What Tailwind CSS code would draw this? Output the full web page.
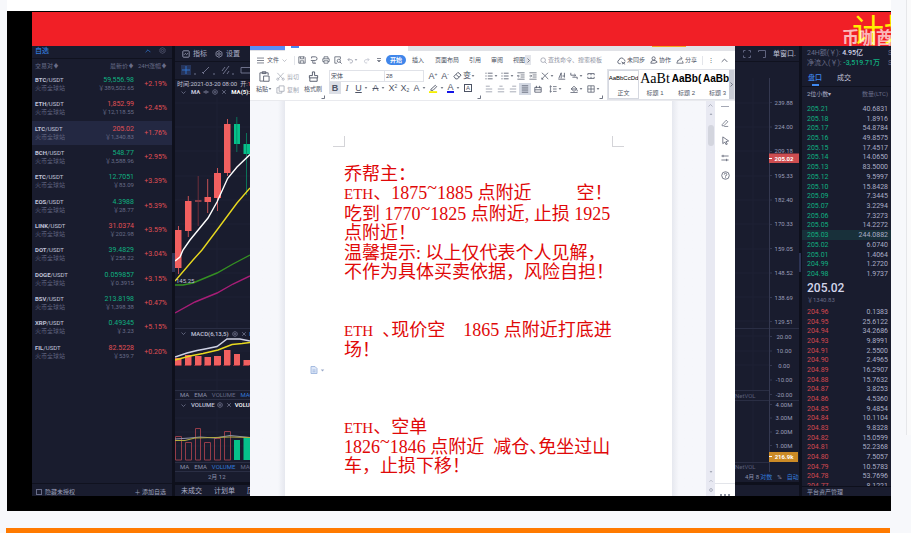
<!DOCTYPE html>
<html lang="zh-CN">
<head>
<meta charset="utf-8">
<title>行情与策略</title>
<script src="https://cdn.jsdelivr.net/npm/@tailwindcss/browser@4"></script>
</head>
<body class="h-screen overflow-hidden bg-[#f7f8fb] flex flex-col font-[Roboto,'Noto_Sans_CJK_SC',sans-serif] text-[7px] leading-[8px]">
<svg class="hidden">
  <defs>
    <symbol id="gear" viewBox="0 0 10 10"><path d="M5 .8 8.7 2.9V7.1L5 9.2 1.3 7.1V2.9Z" fill="none" stroke="currentColor" stroke-width=".9"/><circle cx="5" cy="5" r="1.6" fill="none" stroke="currentColor" stroke-width=".9"/></symbol>
    <symbol id="eye" viewBox="0 0 10 10"><path d="M.8 5Q5 .5 9.2 5 5 9.5.8 5Z" fill="none" stroke="currentColor" stroke-width=".9"/><circle cx="5" cy="5" r="1.3" fill="currentColor"/></symbol>
    <symbol id="x" viewBox="0 0 10 10"><path d="M2 2 8 8M8 2 2 8" stroke="currentColor"/></symbol>
    <symbol id="down" viewBox="0 0 10 10"><path d="M1 3 5 7 9 3" fill="none" stroke="currentColor" stroke-width="1.2"/></symbol>
    <symbol id="up" viewBox="0 0 10 10"><path d="M1 7 5 3 9 7" fill="none" stroke="currentColor" stroke-width="1.2"/></symbol>
    <symbol id="right" viewBox="0 0 10 10"><path d="M3 1 7 5 3 9" fill="none" stroke="currentColor" stroke-width="1.4"/></symbol>
    <symbol id="chart" viewBox="0 0 10 10"><rect x="1" y="1" width="8" height="8" rx="1" fill="none" stroke="currentColor"/><path d="M2.5 6 4.2 4.3 5.8 5.7 7.5 4" fill="none" stroke="currentColor" stroke-width=".9"/></symbol>
    <symbol id="caret" viewBox="0 0 4 4"><path d="M.6 1.2H3.4L2 2.8Z" fill="currentColor"/></symbol>
    <symbol id="save" viewBox="0 0 10 10"><path d="M1 1H8L9 2V9H1ZM3 1V3.5H7V1M2.8 9V6H7.2V9" fill="none" stroke="currentColor" stroke-width=".9"/></symbol>
    <symbol id="export" viewBox="0 0 10 10"><path d="M2 3V1H6.5A2.2 2.2 0 0 1 6.5 5.6H3.5V9H6M1 5.6H3.5M5.5 7.5 7 9 5.5 10" fill="none" stroke="currentColor"/></symbol>
    <symbol id="print" viewBox="0 0 10 10"><path d="M2.5 3.5V1H7.5V3.5M2.5 7H1V3.5H9V7H7.5M2.5 6H7.5V9H2.5Z" fill="none" stroke="currentColor" stroke-width=".9"/></symbol>
    <symbol id="preview" viewBox="0 0 10 10"><path d="M4 9H1V1H8V4" fill="none" stroke="currentColor" stroke-width=".9"/><circle cx="6" cy="6" r="2" fill="none" stroke="currentColor" stroke-width=".9"/><path d="M7.5 7.5 9.5 9.5" stroke="currentColor"/></symbol>
    <symbol id="undo" viewBox="0 0 10 10"><path d="M3.5 1.5 1.3 3.8 3.5 6M1.3 3.8H6A2.4 2.4 0 0 1 6 8.5H4" fill="none" stroke="currentColor"/></symbol>
    <symbol id="redo" viewBox="0 0 10 10"><path d="M6.5 1.5 8.7 3.8 6.5 6M8.7 3.8H4A2.4 2.4 0 0 0 4 8.5H6" fill="none" stroke="currentColor"/></symbol>
    <symbol id="search" viewBox="0 0 10 10"><circle cx="4.5" cy="4.5" r="3.3" fill="none" stroke="currentColor"/><path d="M7 7 9.5 9.5" stroke="currentColor"/></symbol>
    <symbol id="cloud" viewBox="0 0 10 10"><path d="M4 8.5H2.5A2 2 0 0 1 2.3 4.6 2.8 2.8 0 0 1 7.7 4 2.2 2.2 0 0 1 9 6M5 6.5 9 9.2M9 6.8 5.5 9" fill="none" stroke="currentColor" stroke-width=".9"/></symbol>
    <symbol id="person" viewBox="0 0 10 10"><circle cx="4.5" cy="3" r="2" fill="none" stroke="currentColor"/><path d="M1 9Q1 5.5 4.5 5.5 8 5.5 9 7.5L6 9Z" fill="none" stroke="currentColor"/></symbol>
    <symbol id="share" viewBox="0 0 10 10"><path d="M2.5 5 1 9H9L8 6M3 6.5Q3.5 3 7 3M5.5 1 7.8 3 5.5 5" fill="none" stroke="currentColor" stroke-width=".9"/></symbol>
    <symbol id="paste" viewBox="0 0 12 12"><path d="M5 11H1V2H10V4.5M3.5 2V.8H7.5V2.8H3.5ZM5 5.5H11V11.2H5Z" fill="none" stroke="currentColor" stroke-width=".9"/></symbol>
    <symbol id="cut" viewBox="0 0 10 10"><path d="M1.5 1 7.5 7.5M8.5 1 2.5 7.5" stroke="currentColor" stroke-width=".8"/><circle cx="2" cy="8" r="1.2" fill="none" stroke="currentColor" stroke-width=".8"/><circle cx="8" cy="8" r="1.2" fill="none" stroke="currentColor" stroke-width=".8"/></symbol>
    <symbol id="copy" viewBox="0 0 10 10"><path d="M3.5 1H9V7H3.5ZM3.5 3H1V9H6.5V7" fill="none" stroke="currentColor" stroke-width=".9"/></symbol>
    <symbol id="brush" viewBox="0 0 12 12"><path d="M4.8 5V1H7.2V5H10.5V7.5H1.5V5ZM2 7.5V11.2H10V7.5" fill="none" stroke="currentColor"/></symbol>
    <symbol id="eraser" viewBox="0 0 10 10"><path d="M1 6 5.5 1.5 9 4.5 5 8.8H3ZM3.5 4 6.8 7" fill="none" stroke="currentColor"/></symbol>
    <symbol id="bullets" viewBox="0 0 10 10"><path d="M3.5 1.5H9.5M3.5 5H9.5M3.5 8.5H9.5M.5 1.5H2M.5 5H2M.5 8.5H2" stroke="currentColor"/></symbol>
    <symbol id="outdent" viewBox="0 0 10 10"><path d="M.5 1H9.5M4.5 3.7H9.5M4.5 6.3H9.5M.5 9H9.5M3.3 5H.7M2 3.6.6 5 2 6.4" fill="none" stroke="currentColor" stroke-width=".9"/></symbol>
    <symbol id="indent" viewBox="0 0 10 10"><path d="M.5 1H9.5M4.5 3.7H9.5M4.5 6.3H9.5M.5 9H9.5M.6 5H3.2M2 3.6 3.4 5 2 6.4" fill="none" stroke="currentColor" stroke-width=".9"/></symbol>
    <symbol id="cross" viewBox="0 0 10 10"><path d="M1 9 5 4.5 9 9M1 1 5 4.5 9 1M3 9H1V7" fill="none" stroke="currentColor" stroke-width=".9"/></symbol>
    <symbol id="sort" viewBox="0 0 10 10"><path d="M1 8 4 1V8M.5 9H9M8 1V7M5.5 5H8" fill="none" stroke="currentColor"/></symbol>
    <symbol id="tabs" viewBox="0 0 10 10"><path d="M1 1V4H7M5.5 2.5 7 4 5.5 5.5M9 9V6.5H3" fill="none" stroke="currentColor"/></symbol>
    <symbol id="grid4" viewBox="0 0 10 10"><path d="M1 2H9M1 2V4M5 2V4M9 2V4M1 8H9M1 6V8M5 6V8M9 6V8" stroke="currentColor"/></symbol>
    <symbol id="al" viewBox="0 0 10 10"><path d="M1 1.5H6M1 5H9M1 8.5H9" stroke="currentColor"/></symbol>
    <symbol id="ac" viewBox="0 0 10 10"><path d="M3 1.5H7M1 5H9M1 8.5H9" stroke="currentColor"/></symbol>
    <symbol id="ar" viewBox="0 0 10 10"><path d="M4 1.5H9M1 5H9M1 8.5H9" stroke="currentColor"/></symbol>
    <symbol id="aj" viewBox="0 0 10 10"><path d="M1 1H9M1 3.7H9M1 6.3H9M1 9H9" stroke="currentColor"/></symbol>
    <symbol id="ad" viewBox="0 0 10 10"><path d="M1 3V9H9V3M1 6H9M3 1V4M7 1V4M1 3H9" fill="none" stroke="currentColor"/></symbol>
    <symbol id="ls" viewBox="0 0 10 10"><path d="M2 1V9M.7 2.3 2 1 3.3 2.3M.7 7.7 2 9 3.3 7.7M5 2H9.5M5 5H9.5M5 8H9.5" fill="none" stroke="currentColor" stroke-width=".9"/></symbol>
    <symbol id="fill" viewBox="0 0 10 10"><path d="M1.5 5 5 1.5 8.5 5 5 8ZM1.5 5H8.5M9 6V8M.5 9.5H9.5" fill="none" stroke="currentColor"/></symbol>
    <symbol id="border" viewBox="0 0 10 10"><path d="M1 1H9V9H1ZM5 1V9M1 5H9" fill="none" stroke="currentColor" stroke-width=".9"/></symbol>
    <symbol id="launch" viewBox="0 0 4 4"><path d="M3.5.5V3.5H.5" fill="none" stroke="currentColor" stroke-width=".8"/></symbol>
    <symbol id="pen" viewBox="0 0 10 10"><path d="M1.5 7 6.5 1.5 8.5 3.5 3.5 8.5H1.5ZM4 9.3H9" fill="none" stroke="currentColor" stroke-width=".9"/></symbol>
    <symbol id="cursor" viewBox="0 0 10 10"><path d="M2 1 8.5 5.5 5.5 6.2 7 9 5.5 9.5 4.3 6.8 2 8.5Z" fill="none" stroke="currentColor" stroke-width=".9"/></symbol>
    <symbol id="sliders" viewBox="0 0 10 10"><path d="M.5 2.5H9.5M.5 7.5H9.5M2.5 1V4M7 6V9" stroke="currentColor"/></symbol>
    <symbol id="help" viewBox="0 0 10 10"><circle cx="5" cy="5" r="4.2" fill="none" stroke="currentColor" stroke-width=".9"/><path d="M3.6 4A1.4 1.4 0 1 1 5 5.3V6.2M5 7V8" fill="none" stroke="currentColor" stroke-width=".9"/></symbol>
  </defs>
</svg>

<div class="flex flex-1 min-h-0">
  <div class="ml-[7px] flex-1 min-w-0 flex flex-col">
    <div class="h-[11px] shrink-0 bg-white"></div>
    <main class="flex-1 min-h-0 bg-black pt-px pl-[25px] pb-[15px] flex flex-col">
      <header class="relative h-[34px] shrink-0 bg-[#f11f26] overflow-hidden">
        <h1 class="absolute -right-[25px] top-[3px] text-[32px] leading-[32px] text-[#fff000] whitespace-nowrap">计划</h1>
        <p class="absolute -right-[2px] top-[17px] text-[17px] leading-[18px] font-bold text-white/70 whitespace-nowrap">币咖酋</p>
      </header>

      <div class="flex-1 min-h-0 flex bg-[#0e101c] text-[#8c90ab]">

        <!-- Watchlist -->
        <section class="w-[140px] shrink-0 bg-[#191c2e] flex flex-col">
          <div class="h-[13px] px-[3px] pb-[3px] flex items-center justify-between border-b border-[#10121f]">
            <h2 class="font-medium text-[#3279d8]">自选</h2>
            <span class="flex gap-2 items-center pr-[3px]">
              <svg class="size-[6px] text-[#3279d8]"><use href="#up"/></svg>
              <svg class="size-[7px] text-[#5f637e]"><use href="#gear"/></svg>
            </span>
          </div>
          <table class="w-full">
            <thead><tr class="h-[13px] text-[6px] text-[#686c88]">
              <th class="w-[52px] pl-[3px] text-left font-normal">交易对♦</th>
              <th class="text-right font-normal">最新价♦</th>
              <th class="w-[38px] pr-[5px] text-right font-normal whitespace-nowrap">24H涨幅♦</th>
            </tr></thead>
          </table>
          <table class="w-full h-[292px]"><tbody id="watch"></tbody></table>
          <div class="mt-auto h-[13px] px-[4px] pt-[3px] flex items-center justify-between border-t border-[#10121f] text-[#9da1bb]">
            <label class="flex items-center gap-[3px] text-[6px]"><input type="checkbox" class="appearance-none size-[6px] border border-[#686c88]">隐藏未授权</label>
            <button class="pr-[2px] text-[6px]">＋ 添加自选</button>
          </div>
        </section>

        <div class="w-[3px] shrink-0 pt-[207px]"><div class="h-[19px] w-[3px] bg-[#2c3354]"></div></div>

        <!-- Chart, left part -->
        <section class="w-[75px] shrink-0 overflow-hidden whitespace-nowrap flex flex-col bg-[#191c2e] text-[6px]">
          <div class="h-[16px] pl-[7px] flex items-center gap-[8px] text-[7px] text-[#a9adc6] border-b border-[#10121f]">
            <button class="flex items-center gap-[3px]"><svg class="size-[8px]"><use href="#chart"/></svg>指标</button>
            <button class="flex items-center gap-[3px]"><svg class="size-[8px]"><use href="#gear"/></svg>设置</button>
          </div>
          <svg class="h-[17px] w-[75px] shrink-0" viewBox="0 0 75 17" fill="none" stroke="#777b95" stroke-width=".9">
            <rect x="6" y="3" width="10" height="10" fill="#26345a" stroke="none"/>
            <path d="M11 4V12M7 8H15" stroke="#3279d8"/>
            <path d="M28 11 34 5M27 10 29 12M47 9 50 5M48 12 54 4M52 12 54 9M66 5.500H76V11H66Z"/>
            <path d="M19 12H21M38 12H40M57 12H59"/>
          </svg>
          <p class="h-[8px] pl-[2px] border-t border-[#10121f] text-[#c0c3d8] leading-[7px]">时间:2021-03-20 08:00 &nbsp;开:<span class="text-[#e0555a]">197</span></p>
          <div class="h-[10px] pl-[6px] flex items-center">
            <svg class="size-[5px] mr-[5px] shrink-0"><use href="#down"/></svg><b class="w-[13px] font-bold text-[#c0c3d8]">MA</b>
            <span class="flex gap-[3px] mr-[4px] shrink-0"><svg class="size-[6px]"><use href="#eye"/></svg><svg class="size-[6px]"><use href="#gear"/></svg><svg class="size-[6px]"><use href="#x"/></svg></span>
            <b class="text-white">MA(5):</b>
          </div>
          <svg class="h-[231px] w-[75px] shrink-0" viewBox="175 97 75 231">
            <path d="M175 103H250M175 127H250M175 151H250M175 176H250M175 200H250M175 224H250M175 249H250M175 273H250M175 297H250M175 321H250M217 97V328" stroke="#202438" stroke-width=".7"/>
            <path d="M175 230h6.500v38h-6.500ZM185 201h6.500v30h-6.500ZM195 200.500h6.500v1h-6.500ZM204.500 197h6.500v5h-6.500ZM214 173h7v25h-7ZM224 124h6.500v49h-6.500Z" fill="#f16060"/>
            <path d="M178.500 226V274M188.300 196V237M207.700 179V213M217.500 168V211M227.500 119V176" stroke="#f16060" stroke-width=".8"/>
            <path d="M198.200 176V226" stroke="#84343f" stroke-width=".8"/>
            <path d="M234 124h6v20h-6ZM243.500 144H250v10h-6.500Z" fill="#06c18a"/>
            <path d="M236.800 117V152M246.500 133V195" stroke="#078964" stroke-width=".8"/>
            <g fill="none" stroke-width="1.400">
              <path d="M175 261 180 257 183 250 190 240 208 218 217 202 227.700 178.300 237 167 250 154.500" stroke="#fff"/>
              <path d="M175 281 193 260 202 250 217 230 237 203 250 188" stroke="#e8d91f"/>
              <path d="M175 285H183L193 283 205 278 217 273 233 264 250 255" stroke="#349022"/>
              <path d="M175 313 195 302 217 293 233 284 250 276" stroke="#a81d77"/>
            </g>
            <text x="176" y="283" font-size="6" fill="#c0c3d8">145.25</text>
          </svg>
          <div class="h-[10px] pl-[6px] flex items-center border-t border-[#2a2e44]">
            <svg class="size-[5px] mr-[5px] shrink-0"><use href="#down"/></svg><b class="mr-[3px] font-medium text-[#c0c3d8]">MACD(6,13,5)</b>
            <svg class="size-[6px] mr-[3px] shrink-0"><use href="#gear"/></svg><svg class="size-[6px] mr-[3px] shrink-0"><use href="#x"/></svg><b class="font-medium text-white">DIF</b>
          </div>
          <svg class="h-[52px] w-[75px] shrink-0" viewBox="175 338 75 52">
            <path d="M175 351H250M175 380H250M217 338V390" stroke="#202438" stroke-width=".7"/>
            <path d="M175 358h6.500v7h-6.500ZM185 355h6.500v10h-6.500ZM195 356h6.500v9h-6.500ZM204.500 357h6.500v8h-6.500ZM214 356h7v9h-7ZM224 350h6.500v15h-6.500ZM234 354h6v11h-6ZM243.500 360H250v5h-6.500Z" fill="#f16060"/>
            <path d="M175 365.500H250" stroke="#9a3540" stroke-dasharray="6.500 3.200"/>
            <path d="M175 357 187 353 197 350.500 205 349 217 346.500 227 339H240L250 341" fill="none" stroke="#cfd2e4" stroke-width="1.400"/>
            <path d="M175 360 190 356 203 353.500 218 350 232 344.500 242 343.500 250 342.500" fill="none" stroke="#e8d91f" stroke-width="1.400"/>
          </svg>
          <div class="h-[10px] pl-[5px] flex items-center gap-[5px] border-y border-[#2a2e44]"><span>MA</span><span>EMA</span><span class="text-[#676b86]">VOLUME</span><span class="text-[#3279d8]">MACD</span></div>
          <div class="h-[10px] pl-[6px] flex items-center">
            <svg class="size-[5px] mr-[5px] shrink-0"><use href="#down"/></svg><b class="mr-[2px] font-medium text-[#c0c3d8]">VOLUME</b>
            <svg class="size-[6px] mr-[3px] shrink-0"><use href="#gear"/></svg><svg class="size-[6px] mr-[3px] shrink-0"><use href="#x"/></svg><b class="font-medium text-white">VOLUME</b>
          </div>
          <svg class="h-[52px] w-[75px] shrink-0" viewBox="175 410 75 52">
            <path d="M175 418H250M175 432H250M175 446H250M217 410V462" stroke="#202438" stroke-width=".7"/>
            <path d="M175.500 436.500h6V460h-6ZM185.500 442.500h6V460h-6ZM195.500 428.500h5V460h-5ZM204.500 442.500h6V460h-6ZM214.500 438.500h6V460h-6ZM224.500 431.500h6V460h-6Z" fill="none" stroke="#943c49"/>
            <path d="M234 440h6v20h-6ZM243.500 437H250v23h-6.500Z" fill="#06c18a"/>
            <path d="M175 439 190 438 200 437 215 438 230 435.500 250 437.500" fill="none" stroke="#8f92a8"/>
            <path d="M175 440.500H185L195 438 215 437.500 230 437 250 437.500" fill="none" stroke="#b3ab40"/>
          </svg>
          <div class="h-[10px] pl-[5px] flex items-center gap-[5px] border-y border-[#2a2e44]"><span>MA</span><span>EMA</span><span class="text-[#3279d8]">VOLUME</span><span class="text-[#676b86]">MACD</span></div>
          <p class="h-[10px] pl-[33px] leading-[10px]">2月 12</p>
          <div class="h-[3px] bg-[#0e101c]"></div>
          <nav class="mt-auto h-[10px] pl-[6px] flex items-center gap-[12px] text-[7px] text-[#a9adc6]"><a href="#">未成交</a><a href="#">计划单</a><a href="#">历史</a></nav>
        </section>

        <!-- Word processor -->
        <section class="flex-1 min-w-0 bg-white text-[#4d5364] flex flex-col overflow-hidden font-['Liberation_Sans','Noto_Sans_CJK_SC',sans-serif]">
          <div class="h-[5px] shrink-0 flex bg-[#e1e2e7]">
            <div class="w-[35px] h-[4px] bg-[#5b8cf5]"></div>
            <div class="w-[123px] bg-white pl-[6px]"><div class="w-[8px] h-[2px] bg-[#4a85f0]"></div></div>
            <div class="ml-auto mr-[49px] w-[34px] h-px bg-[#f5a623]"></div>
          </div>
          <nav class="h-[18px] shrink-0 pl-[7px] pr-[7px] flex items-center whitespace-nowrap text-[6px]">
            <button class="flex items-center gap-[3px] w-[37px]"><svg class="size-[7px]" viewBox="0 0 10 10"><path d="M0 1.500H10M0 5H10M0 8.500H10" stroke="currentColor"/></svg>文件<svg class="size-[5px] text-[#9a9eaa]"><use href="#down"/></svg></button>
            <span class="w-[2px] h-[9px] border-l border-[#e3e5ea]"></span>
            <button class="w-3" aria-label="保存"><svg class="mx-auto size-[8px]"><use href="#save"/></svg></button>
            <button class="w-3" aria-label="输出"><svg class="mx-auto size-[8px]"><use href="#export"/></svg></button>
            <button class="w-3" aria-label="打印"><svg class="mx-auto size-[8px]"><use href="#print"/></svg></button>
            <button class="w-3" aria-label="预览"><svg class="mx-auto size-[8px]"><use href="#preview"/></svg></button>
            <button class="w-4 flex items-center justify-center text-[#8f94a3]" aria-label="撤销"><svg class="size-[7px]"><use href="#undo"/></svg><svg class="size-[4px]"><use href="#caret"/></svg></button>
            <button class="w-3 text-[#b8bcc8]" aria-label="恢复"><svg class="mx-auto size-[7px]"><use href="#redo"/></svg></button>
            <button class="w-[14px]" aria-label="更多"><svg class="mx-auto size-[6px]" viewBox="0 0 6 6"><path d="M1 1.500H5M1.500 3.500H4.500L3 5Z" stroke="currentColor" stroke-width=".7" fill="none"/></svg></button>
            <button class="w-[20px] h-[10px] rounded-full bg-[#4086ea] text-white font-bold leading-[10px]">开始</button>
            <button class="ml-[6px]">插入</button>
            <button class="ml-[11px]">页面布局</button>
            <button class="ml-[10px]">引用</button>
            <button class="ml-[10px]">审阅</button>
            <button class="ml-[10px]">视图</button>
            <button class="w-[6px] h-[10px] bg-[#e3e5ea]" aria-label="更多选项卡"><svg class="mx-auto size-[5px]"><use href="#right"/></svg></button>
            <label class="ml-[9px] flex items-center gap-px text-[#8f94a3]"><svg class="size-[7px]"><use href="#search"/></svg><input class="w-[64px] placeholder:text-[#8f94a3]" placeholder="查找命令、搜索模板" aria-label="查找命令"></label>
            <span class="ml-auto flex items-center gap-[5px]">
              <button class="flex items-center gap-px"><svg class="size-[9px]"><use href="#cloud"/></svg>未同步</button>
              <button class="flex items-center gap-px"><svg class="size-[8px]"><use href="#person"/></svg>协作</button>
              <button class="flex items-center gap-px"><svg class="size-[8px]"><use href="#share"/></svg>分享</button>
              <span class="h-[9px] border-l border-[#e3e5ea]"></span>
              <button>⋮</button>
              <button class="pl-[2px]" aria-label="收起"><svg class="size-[7px]"><use href="#up"/></svg></button>
            </span>
          </nav>

          <div class="h-[32px] shrink-0 pl-[6px] flex whitespace-nowrap text-[6px] border-b border-[#e9eaee]">
            <button class="w-[20px] pt-[2px] flex flex-col items-start gap-[3px]"><svg class="ml-[3px] size-[11px]"><use href="#paste"/></svg><span class="flex items-center">粘贴<svg class="size-[4px]"><use href="#caret"/></svg></span></button>
            <div class="w-[27px] pt-[3px] flex flex-col gap-[4px] text-[#a4a8b4]">
              <button class="flex items-center gap-[2px]"><svg class="size-[9px]"><use href="#cut"/></svg>剪切</button>
              <button class="flex items-center gap-[2px]"><svg class="size-[9px]"><use href="#copy"/></svg>复制</button>
            </div>
            <button class="w-[20px] pt-[2px] flex flex-col items-center gap-[3px]"><svg class="size-[11px]"><use href="#brush"/></svg>格式刷</button>
            <svg class="mt-[26px] -ml-[2px] w-[4px] h-[4px]"><use href="#launch"/></svg>

            <div class="ml-[4px] w-[148px] flex flex-col">
              <div class="h-[13px] flex items-center text-[9px]">
                <select class="appearance-none w-[56px] h-[12px] border border-[#e0e2e8] pl-px text-[6px] leading-[8px]" aria-label="字体"><option>宋体</option></select>
                <select class="appearance-none w-[39px] h-[12px] border border-l-0 border-[#e0e2e8] pl-px text-[6px] leading-[8px] mr-[3px]" aria-label="字号"><option>28</option></select>
                <button class="w-3">A<sup class="text-[5px]">+</sup></button>
                <button class="w-3">A<sup class="text-[5px]">-</sup></button>
                <button class="w-3" aria-label="清除格式"><svg class="mx-auto size-[9px]"><use href="#eraser"/></svg></button>
                <button class="w-[14px] flex items-center text-[8px]">变<svg class="size-[4px]"><use href="#caret"/></svg></button>
              </div>
              <div class="h-[12px] flex items-center text-[9px] leading-[11px]">
                <button class="w-3 h-[12px] bg-[#dcdfe6] font-bold">B</button>
                <button class="w-3 italic font-['Liberation_Serif',serif]">I</button>
                <button class="w-[17px] flex items-center justify-center"><u>U</u><svg class="ml-[2px] size-[4px]"><use href="#caret"/></svg></button>
                <button class="w-[17px] flex items-center justify-center"><s>A</s><svg class="ml-[2px] size-[4px]"><use href="#caret"/></svg></button>
                <button class="w-3">X<sup class="text-[5px]">2</sup></button>
                <button class="w-3">X<sub class="text-[5px]">2</sub></button>
                <button class="w-[17px] flex items-center justify-center">A<svg class="ml-[2px] size-[4px]"><use href="#caret"/></svg></button>
                <button class="w-[17px] flex items-center justify-center" aria-label="突出显示"><svg class="size-[9px]" viewBox="0 0 10 10"><path d="M2 6 7 1.500 8.500 3 4.500 7H2Z" fill="none" stroke="currentColor"/><path d="M0 9H9" stroke="#f4ee00" stroke-width="2"/></svg><svg class="ml-[2px] size-[4px]"><use href="#caret"/></svg></button>
                <button class="w-[17px] flex items-center justify-center"><span class="leading-[8px] border-b-2 border-[#1414e6]">A</span><svg class="ml-[2px] size-[4px]"><use href="#caret"/></svg></button>
                <button class="size-[8px] ml-[2px] border border-[#4d5364] text-[6px] leading-[6px]">A</button>
              </div>
            </div>
            <svg class="mt-[26px] w-[4px] h-[4px]"><use href="#launch"/></svg>

            <div class="ml-[4px] w-[116px] pt-[2px] flex flex-col gap-[4px]">
              <div class="h-[9px] flex items-center">
                <button class="w-[16px] flex items-center gap-px" aria-label="项目符号"><svg class="size-[8px]"><use href="#bullets"/></svg><svg class="size-[4px]"><use href="#caret"/></svg></button>
                <button class="w-[16px] flex items-center gap-px" aria-label="编号"><svg class="size-[8px]"><use href="#bullets"/></svg><svg class="size-[4px]"><use href="#caret"/></svg></button>
                <button class="w-3" aria-label="减少缩进"><svg class="size-[8px]"><use href="#outdent"/></svg></button>
                <button class="w-3" aria-label="增加缩进"><svg class="size-[8px]"><use href="#indent"/></svg></button>
                <button class="w-[17px] flex items-center gap-px" aria-label="中文版式"><svg class="size-[8px]"><use href="#cross"/></svg><svg class="size-[4px]"><use href="#caret"/></svg></button>
                <button class="w-3" aria-label="排序"><svg class="size-[8px]"><use href="#sort"/></svg></button>
                <button class="w-[17px] flex items-center gap-px" aria-label="制表位"><svg class="size-[8px]"><use href="#tabs"/></svg><svg class="size-[4px]"><use href="#caret"/></svg></button>
                <button aria-label="表格"><svg class="size-[8px]"><use href="#grid4"/></svg></button>
              </div>
              <div class="h-[9px] flex items-center">
                <button class="w-3 text-[#9297a4]" aria-label="左对齐"><svg class="size-[8px]"><use href="#al"/></svg></button>
                <button class="w-3 text-[#9297a4]" aria-label="居中"><svg class="size-[8px]"><use href="#ac"/></svg></button>
                <button class="w-[10px] text-[#9297a4]" aria-label="右对齐"><svg class="size-[8px]"><use href="#ar"/></svg></button>
                <button class="w-3 h-[12px] bg-[#d4d9e3]" aria-label="两端对齐"><svg class="mx-auto size-[8px]"><use href="#aj"/></svg></button>
                <button class="w-[18px] pl-[3px]" aria-label="分散对齐"><svg class="size-[8px]"><use href="#ad"/></svg></button>
                <button class="w-[21px] flex items-center gap-px" aria-label="行距"><svg class="size-[8px]"><use href="#ls"/></svg><svg class="size-[4px]"><use href="#caret"/></svg></button>
                <button class="w-[17px] flex items-center gap-px" aria-label="底纹"><svg class="size-[8px]"><use href="#fill"/></svg><svg class="size-[4px]"><use href="#caret"/></svg></button>
                <button class="flex items-center gap-px" aria-label="边框"><svg class="size-[8px]"><use href="#border"/></svg><svg class="size-[4px]"><use href="#caret"/></svg></button>
              </div>
            </div>
            <svg class="mt-[26px] -ml-[2px] w-[4px] h-[4px] shrink-0"><use href="#launch"/></svg>

            <div class="ml-[4px] flex-1 min-w-0 flex border border-[#e0e2e8] text-center">
              <button class="w-[31px] shrink-0 overflow-hidden border border-[#d5d8e0] flex flex-col items-center justify-between"><span class="h-[17px] leading-[15px] text-[6px] text-black">AaBbCcDd</span><span class="pb-px">正文</span></button>
              <button class="w-[32px] shrink-0 overflow-hidden flex flex-col items-center justify-between"><span class="h-[18px] leading-[17px] text-[14px] text-black font-['Liberation_Serif',serif]">AaBt</span><span class="pb-[2px]">标题 1</span></button>
              <button class="w-[31px] shrink-0 overflow-hidden flex flex-col items-center justify-between"><span class="h-[18px] leading-[17px] text-[10px] font-bold text-black">AaBb(</span><span class="pb-[2px]">标题 2</span></button>
              <button class="flex-1 min-w-0 overflow-hidden flex flex-col items-start justify-between"><span class="h-[18px] pl-px leading-[17px] text-[10px] font-bold text-black">AaBb(</span><span class="pl-[7px] pb-[2px]">标题 3</span></button>
              <button class="w-[5px] shrink-0 bg-[#c9ccd6]" aria-label="更多样式"><svg class="size-[5px]"><use href="#right"/></svg></button>
            </div>
          </div>

          <div class="flex-1 min-h-0 flex bg-[#f6f7fb]">
            <div class="w-[35px] shrink-0 bg-linear-to-r from-[#f6f7fb] from-80% to-[#e6e8ef]"></div>
            <article class="flex-1 min-w-0 bg-white overflow-hidden pt-[35px] text-[18px] leading-[19px] text-[#e00808] font-['Liberation_Serif','Noto_Sans_CJK_SC',serif]">
              <div class="mx-[48px] h-[12px] flex justify-between"><div class="w-[12px] h-[11px] border-r border-b border-[#d4d4d8]"></div><div class="w-[12px] h-[11px] border-l border-b border-[#d4d4d8]"></div></div>
              <div class="mt-[17px] pl-[59px] h-[117px] flex flex-col justify-between *:whitespace-pre">
                <p>乔帮主：</p>
                <p><span class="text-[15px]">ETH</span>、1875<span class="align-[5px] leading-[0px]">~</span>1885 点附近　　  空！</p>
                <p>吃到 1770<span class="align-[5px] leading-[0px]">~</span>1825 点附近, 止损 1925</p>
                <p>点附近！</p>
                <p>温馨提示: 以上仅代表个人见解，</p>
                <p>不作为具体买卖依据，风险自担！</p>
              </div>
              <div class="mt-[39px] pl-[59px] *:whitespace-pre">
                <p><span class="text-[15px]">ETH</span>  <span class="[font-feature-settings:'halt']">、</span>现价空　1865 点附近打底进</p>
                <p>场！</p>
              </div>
              <div class="mt-[5px] ml-[25px] h-[10px] flex items-center gap-[2px] text-[#9aa9c8]"><svg class="size-[8px]" viewBox="0 0 8 8"><path d="M1 .5H5L7 2.500V7.500H1ZM2.500 4H5.500M2.500 5.800H5.500" fill="#dfe8f8" stroke="#9db5de" stroke-width=".9"/></svg><svg class="size-[5px]"><use href="#caret"/></svg></div>
              <div class="mt-[43px] pl-[59px] h-[58px] flex flex-col justify-between *:whitespace-pre">
                <p><span class="text-[15px]">ETH</span>、空单</p>
                <p>1826<span class="align-[5px] leading-[0px]">~</span>1846 点附近  减仓<span class="[font-feature-settings:'halt']">、</span>免坐过山</p>
                <p>车，止损下移！</p>
              </div>
            </article>
            <div class="w-[34px] shrink-0 bg-linear-to-r from-[#e6e8ef] to-[#f6f7fb] to-20%"></div>
            <div class="w-[9px] shrink-0 bg-[#e8e9f2] flex flex-col items-center text-[#8f94a3]">
              <svg class="size-[5px] mt-[2px]"><use href="#up"/></svg><svg class="size-[4px] mt-[4px] rotate-180"><use href="#caret"/></svg>
              <div class="mt-[9px] w-[6px] h-[21px] rounded-full bg-[#d3d5de]"></div>
              <div class="mt-auto flex flex-col gap-[5px] pb-[4px]"><svg class="size-[4px]"><use href="#caret"/></svg><svg class="size-[4px]"><use href="#up"/></svg><svg class="size-[4px]" viewBox="0 0 4 4"><circle cx="2" cy="2" r="1.400" fill="none" stroke="currentColor" stroke-width=".7"/></svg></div>
            </div>
            <aside class="w-[20px] shrink-0 bg-white flex flex-col items-center text-[#5b6172] pt-[5px]">
              <div class="w-[8px] h-px bg-[#a4a8b4]"></div>
              <button class="mt-[12px]" aria-label="编辑"><svg class="size-[8px]"><use href="#pen"/></svg></button>
              <button class="mt-[9px]" aria-label="选择"><svg class="size-[9px]"><use href="#cursor"/></svg></button>
              <button class="mt-[9px]" aria-label="设置"><svg class="size-[8px]"><use href="#sliders"/></svg></button>
              <button class="mt-[9px]" aria-label="帮助"><svg class="size-[9px]"><use href="#help"/></svg></button>
              <div class="mt-auto w-full h-[13px] pt-[10px] border-t border-[#e3e5ea] flex justify-center gap-[2px]"><i class="size-[2px] bg-[#8f94a3]"></i><i class="size-[2px] bg-[#8f94a3]"></i><i class="size-[2px] bg-[#8f94a3]"></i></div>
            </aside>
          </div>
        </section>

        <!-- Price axis -->
        <section class="w-[64px] shrink-0 bg-[#191c2e] flex flex-col overflow-hidden whitespace-nowrap">
          <div class="h-[16px] pl-[8px] flex items-center gap-[7px] border-b border-[#10121f]">
            <svg class="size-[8px]" viewBox="0 0 8 8" fill="none" stroke="#5f637e"><path d="M.5 2.500V.5H2.500M5.500.5H7.500V2.500M7.500 5.500V7.500H5.500M2.500 7.500H.5V5.500"/></svg>
            <svg class="size-[8px]" viewBox="0 0 8 8" fill="none" stroke="#5f637e"><path d="M.5 2V.5H7.500V7.500H5"/></svg>
            <span class="text-[#c0c3d8]">单窗口.</span>
          </div>
          <svg class="h-[410px] w-[64px] shrink-0" viewBox="735 62 64 410" font-size="6" fill="#9a9eb8">
            <path d="M735 103H769M735 127H769M735 151H769M735 176H769M735 200H769M735 224H769M735 249H769M735 273H769M735 297H769M735 321H769M735 336H769M735 351H769M735 365H769M753 78V471" stroke="#202438" stroke-width=".7"/>
            <path d="M735 328.500H799M735 390.500H769M735 400.500H799M735 462.500H769" stroke="#2a2e44"/>
            <path d="M769.500 78V472M769 102.500H772M769 127H772M769 151.500H772M769 175.500H772M769 200H772M769 224.500H772M769 248.500H772M769 273H772M769 297.500H772M769 321.500H772M769 336.500H772M769 351H772M769 365.500H772M769 380H772M769 394.500H772M769 404.500H772M769 418H772M769 432H772M769 445.500H772" stroke="#343850"/>
            <g text-anchor="end">
              <text x="793" y="105">239.88</text><text x="793" y="129">224.00</text><text x="793" y="153">209.18</text><text x="793" y="178">195.33</text><text x="793" y="202">182.40</text><text x="793" y="226">170.33</text><text x="793" y="251">159.05</text><text x="793" y="275">148.52</text><text x="793" y="300">138.69</text><text x="793" y="324">129.51</text>
            </g>
            <g text-anchor="middle">
              <text x="784" y="339">20.00</text><text x="784" y="353">10.00</text><text x="784" y="368">0.00</text><text x="784" y="382">-10.00</text><text x="784" y="397">-20.00</text><text x="784" y="407">4.00M</text><text x="784" y="420">3.00M</text><text x="784" y="434">2.00M</text><text x="784" y="448">1.00M</text>
            </g>
            <text x="735" y="398" fill="#5a5e78">NetVOL</text><text x="735" y="469" fill="#5a5e78">NetVOL</text>
            <rect x="769" y="153.500" width="30" height="9.500" fill="#cd4d50"/><path d="M769 158.500H772" stroke="#fff"/>
            <text x="784" y="161" text-anchor="middle" fill="#fff" font-weight="700">205.02</text>
            <rect x="769" y="452" width="29" height="10" fill="#cb8a26"/><path d="M769 456.500H772" stroke="#fff"/>
            <text x="784" y="459" text-anchor="middle" fill="#fff" font-weight="700">216.9k</text>
          </svg>
          <div class="h-[10px] pl-[10px] flex items-center text-[6px] leading-[10px]">4月 8<span class="ml-px text-[#3279d8]">对数</span><span class="ml-[5px]">%</span><span class="ml-[5px] text-[#3279d8]">自动</span></div>
          <div class="h-[3px] bg-[#0e101c]"></div>
        </section>

        <div class="w-[3px] shrink-0 pt-[207px]"><div class="h-[19px] w-[2px] bg-[#2c3354]"></div></div>

        <!-- Order book -->
        <section class="w-[89px] shrink-0 bg-[#191c2e] flex flex-col overflow-hidden whitespace-nowrap">
          <div class="flex-1 min-h-0 overflow-hidden">
            <div class="h-[24px] pl-[5px] pt-[2px] leading-[10px] text-[#686c88] overflow-hidden">
              <p class="flex justify-between"><span>24H额(￥): <b class="font-medium text-[#d3d6ea]">4.95亿</b></span><span class="w-[3px] overflow-hidden">S</span></p>
              <p class="flex justify-between"><span>净流入(￥): <b class="font-medium text-[#10b080]">-3,519.71万</b></span><span class="w-[3px] overflow-hidden">S</span></p>
            </div>
            <nav class="h-[17px] pl-[6px] pt-[4px] flex gap-[15px] border-b border-[#10121f] text-[#c0c3d8]">
              <a href="#" class="flex flex-col items-center text-[#3f88f0] font-medium">盘口<span class="mt-[2px] w-[7px] h-[2px] bg-[#3f88f0]"></span></a><a href="#">成交</a>
            </nav>
            <div class="h-[17px] pl-[5px] pr-[3px] pt-[3px] flex justify-between text-[6px]"><button class="self-start text-[#a9adc6]">2位小数▾</button><span class="text-[#686c88]">数量(LTC)</span></div>
            <table class="w-full h-[175px]"><tbody id="bids"></tbody></table>
            <div class="h-[28px] pl-[5px] pt-[3px]"><p class="text-[12px] leading-[13px] font-medium text-[#d3d6ea]">205.02</p><p class="pt-px text-[6px] text-[#686c88]">￥1340.83</p></div>
            <table class="w-full h-[184px]"><tbody id="asks"></tbody></table>
          </div>
          <a href="#" class="h-[10px] shrink-0 pl-[5px] border-t border-[#0e101c] text-[6px] leading-[9px] text-[#9da1bb]">平台资产管理</a>
        </section>
      </div>
    </main>
  </div>
  <div class="ml-[15px] w-[5px] shrink-0 h-[435px] border-l border-[#e6e7ea] bg-[#fafafb]"></div>
</div>
<footer class="h-[22px] shrink-0 pt-[17px] pl-[6px] pr-[21px]"><div class="h-[5px] bg-[#ff7a00]"></div></footer>

<script>
const up = 'text-right text-[#10b080]', dn = 'text-right text-[#e05055]';
document.getElementById('watch').innerHTML = [
  ['BTC','59,556.98','389,502.65','+2.19%',1],['ETH','1,852.99','12,118.55','+2.45%',0],['LTC','205.02','1,340.83','+1.76%',0],
  ['BCH','548.77','3,588.96','+2.95%',1],['ETC','12.7051','83.09','+3.39%',1],['EOS','4.3988','28.77','+5.39%',1],
  ['LINK','31.0374','202.98','+3.59%',0],['DOT','39.4829','258.22','+3.04%',1],['DOGE','0.059857','0.3915','+3.15%',1],
  ['BSV','213.8198','1,398.38','+0.47%',1],['XRP','0.49345','3.23','+5.15%',1],['FIL','82.5228','539.7','+0.20%',0]
].map(r => `<tr class="${r[0]==='LTC' ? 'bg-[#232842]' : ''}"><td class="pl-[3px]"><p class="text-[6px] text-[#c0c3d8]"><b class="font-bold">${r[0]}</b>/USDT</p><p class="text-[6px] text-[#5f637e]">火币全球站</p></td><td class="text-right"><p class="${r[4] ? up : dn}">${r[1]}</p><p class="text-[#686c88] text-[6px]">￥${r[2]}</p></td><td class="w-[38px] pr-[5px] text-right text-[#e05055]">${r[3]}</td></tr>`).join('');

const book = (id, rows, tone) => document.getElementById(id).innerHTML = rows.split(' ').map(s => s.split(':')).map(([p, q]) =>
  `<tr class="${p==='205.03' ? 'bg-[#18303a]' : ''}"><td class="pl-[5px] ${tone}">${p}</td><td class="pr-[3px] text-right text-[#a9adc6]">${q}</td></tr>`).join('');
book('bids', '205.21:40.6831 205.18:1.8916 205.17:54.8784 205.16:49.8575 205.15:17.4517 205.14:14.0650 205.13:83.5000 205.12:9.5997 205.10:15.8428 205.09:7.3445 205.07:3.2294 205.06:7.3273 205.05:14.2272 205.03:244.0882 205.02:6.0740 205.01:1.4064 204.99:1.2720 204.98:1.9737', 'text-[#10b080]');
book('asks', '204.96:0.1383 204.95:25.6122 204.94:34.2686 204.93:9.8991 204.91:2.5500 204.90:2.4965 204.89:16.2907 204.88:15.7632 204.87:3.8253 204.86:4.5360 204.85:9.4854 204.84:10.1104 204.83:9.8328 204.82:15.0599 204.81:52.2368 204.80:7.5057 204.79:10.5783 204.78:53.7696 204.77:8.1221', 'text-[#d3484e]');
</script>
</body>
</html>
